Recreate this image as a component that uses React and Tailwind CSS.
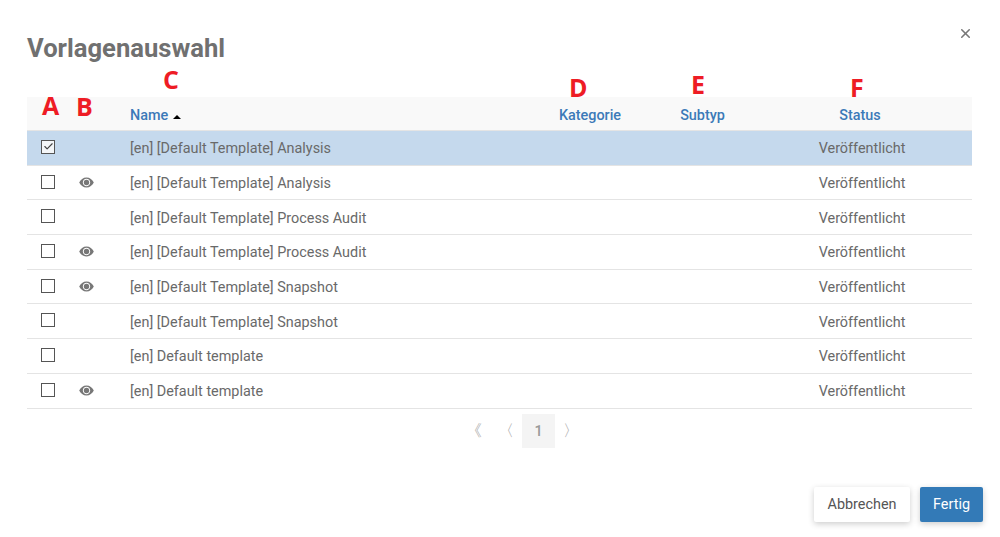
import { Check, X } from 'lucide-react'

const rows = [
  { name: '[en] [Default Template] Analysis', checked: true },
  { name: '[en] [Default Template] Analysis', eye: true },
  { name: '[en] [Default Template] Process Audit' },
  { name: '[en] [Default Template] Process Audit', eye: true },
  { name: '[en] [Default Template] Snapshot', eye: true },
  { name: '[en] [Default Template] Snapshot' },
  { name: '[en] Default template' },
  { name: '[en] Default template', eye: true },
]

const cols = 'grid grid-cols-[42px_61px_400px_120px_102px_220px]'

function Eye() {
  return (
    <svg width="15" height="11" viewBox="0 0 15 11" fill="#777">
      <path d="M7.5 0.5C4.2 0.5 1.6 2.6 0.2 5.5c1.4 2.9 4 5 7.3 5s5.9-2.1 7.3-5C13.4 2.6 10.8 0.5 7.5 0.5zm0 1.3c2.1 0 3.7 1.7 3.7 3.7S9.6 9.2 7.5 9.2 3.8 7.5 3.8 5.5 5.4 1.8 7.5 1.8z" />
      <circle cx="7.5" cy="5.5" r="2.7" />
    </svg>
  )
}

function Mark({ children, className }) {
  return (
    <span className={`absolute text-[25px] leading-none font-bold text-[#ee1c25] font-['Open_Sans',sans-serif] ${className}`}>
      {children}
    </span>
  )
}

export default function App() {
  return (
    <div className="relative w-[1000px] h-[537px] bg-white overflow-hidden font-['Roboto',sans-serif] text-[14.4px] text-[#696969]">
      <button className="absolute top-[26px] left-[958px] text-[#777]">
        <X size={15} strokeWidth={2.5} />
      </button>

      <div className="pl-[27px] pt-[32px] w-[972px]">
        <h1 className="text-[25.6px] leading-[32px] font-bold text-[#707070]">Vorlagenauswahl</h1>

        {/* Table */}
        <div className="mt-[33px] w-[945px]">
          <div className={`${cols} h-[34px] items-center pt-[4px] bg-[#f9f9f9] border-b border-[#e4e4e4] font-medium text-[#3c7ab8]`}>
            <div />
            <div />
            <div className="flex items-center gap-[5px]">
              Name
              <span className="mt-[3px] w-0 h-0 border-x-[4px] border-x-transparent border-b-[4px] border-b-black" />
            </div>
            <div className="text-center">Kategorie</div>
            <div className="text-center pl-[3px]">Subtyp</div>
            <div className="text-center pr-[4px]">Status</div>
          </div>

          {rows.map((row, i) => (
            <div
              key={i}
              className={`${cols} h-[34.7px] items-center border-b border-[#e4e4e4] ${row.checked ? 'bg-[#c5d9ed]' : 'bg-white'}`}
            >
              <div className="flex justify-center">
                <span className={`flex items-center justify-center w-[14px] h-[14px] -mt-[2px] border border-[#555] ${row.checked ? 'bg-[#f4f6f8]' : 'bg-white'}`}>
                  {row.checked && <Check size={11} strokeWidth={2.5} className="text-[#444]" />}
                </span>
              </div>
              <div className="flex pl-[10px]">{row.eye && <Eye />}</div>
              <div className="pt-[2.6px]">{row.name}</div>
              <div />
              <div />
              <div className="text-center pt-[2.6px]">Veröffentlicht</div>
            </div>
          ))}
        </div>

        {/* Pagination */}
        <div className="flex justify-center items-center mt-[5px] ml-[45px] h-[34px] text-[#a8a8a8]">
          <span className="w-[31px] pt-[1px] text-center text-[16px]">《</span>
          <span className="w-[33px] pt-[1px] text-center text-[16px]">〈</span>
          <span className="w-[33px] h-[34px] pt-[2px] flex items-center justify-center bg-[#f4f4f4] text-[#999] font-medium">1</span>
          <span className="w-[31px] pt-[1px] text-center text-[16px]">〉</span>
        </div>
      </div>

      {/* Footer buttons */}
      <div className="absolute top-[487px] right-[17px] flex gap-[10px]">
        <button className="w-[96px] h-[35px] bg-white rounded-[2px] shadow-[0_2px_6px_rgba(0,0,0,0.2)] text-[#555]">Abbrechen</button>
        <button className="w-[63px] h-[35px] bg-[#337ab7] rounded-[2px] shadow-[0_2px_6px_rgba(0,0,0,0.2)] text-white">Fertig</button>
      </div>

      {/* Red annotation letters */}
      <Mark className="left-[42px] top-[93px]">A</Mark>
      <Mark className="left-[76px] top-[94px]">B</Mark>
      <Mark className="left-[163px] top-[67px]">C</Mark>
      <Mark className="left-[569px] top-[75px]">D</Mark>
      <Mark className="left-[691px] top-[72px]">E</Mark>
      <Mark className="left-[850px] top-[75px]">F</Mark>
    </div>
  )
}
